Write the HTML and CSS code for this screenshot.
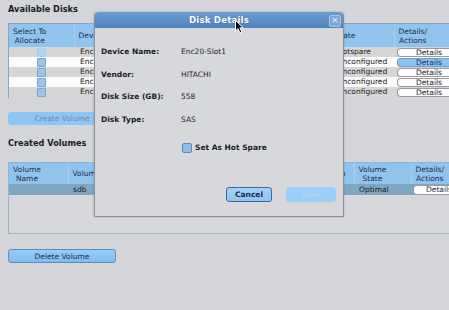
FILE: index.html
```html
<!DOCTYPE html>
<html>
<head>
<meta charset="utf-8">
<link rel="stylesheet" href="styles.css">
</head>
<body>
<div class="page">
  <h2 class="section-title">Available Disks</h2>
  <div class="table-frame disks-frame">
    <table class="grid disks">
      <colgroup>
        <col class="c-sel"><col class="c-dev"><col class="c-enc"><col class="c-slot"><col class="c-size"><col class="c-state"><col class="c-act">
      </colgroup>
      <thead>
        <tr>
          <th><span class="hd">Select To<br>Allocate</span></th>
          <th><span class="hd">Device</span></th>
          <th></th>
          <th></th>
          <th></th>
          <th><span class="hd">State</span></th>
          <th><span class="hd">Details/<br>Actions</span></th>
        </tr>
      </thead>
      <tbody>
        <tr class="odd"><td class="chk"><span class="cb cb-focus"></span></td><td>Enc20-Slot0</td><td></td><td></td><td></td><td>Hotspare</td><td class="act"><span class="pill">Details</span></td></tr>
        <tr class="even"><td class="chk"><span class="cb"></span></td><td>Enc20-Slot1</td><td></td><td></td><td></td><td>Unconfigured</td><td class="act"><span class="pill pill-on">Details</span></td></tr>
        <tr class="odd"><td class="chk"><span class="cb"></span></td><td>Enc20-Slot2</td><td></td><td></td><td></td><td>Unconfigured</td><td class="act"><span class="pill">Details</span></td></tr>
        <tr class="even"><td class="chk"><span class="cb"></span></td><td>Enc20-Slot3</td><td></td><td></td><td></td><td>Unconfigured</td><td class="act"><span class="pill">Details</span></td></tr>
        <tr class="odd"><td class="chk"><span class="cb"></span></td><td>Enc20-Slot4</td><td></td><td></td><td></td><td>Unconfigured</td><td class="act"><span class="pill">Details</span></td></tr>
      </tbody>
    </table>
  </div>
  <button class="wide-btn create-btn" disabled>Create Volume</button>

  <h2 class="section-title created-title">Created Volumes</h2>
  <div class="table-frame volumes-frame">
    <table class="grid volumes">
      <colgroup>
        <col class="v-name"><col class="v-dev"><col class="v-raid"><col class="v-size"><col class="v-alloc"><col class="v-state"><col class="v-act">
      </colgroup>
      <thead>
        <tr>
          <th><span class="hd">Volume<br>Name</span></th>
          <th><span class="hd">Volume</span></th>
          <th></th>
          <th></th>
          <th class="th-right">n</th>
          <th><span class="hd">Volume<br>State</span></th>
          <th><span class="hd">Details/<br>Actions</span></th>
        </tr>
      </thead>
      <tbody>
        <tr class="vol-row"><td></td><td class="sdb">sdb</td><td></td><td></td><td></td><td class="opt">Optimal</td><td class="act"><span class="pill pill-vol">Details</span></td></tr>
      </tbody>
    </table>
  </div>
  <button class="wide-btn delete-btn">Delete Volume</button>
</div>

<div class="dialog">
  <div class="dlg-title">
    <span class="dlg-title-text">Disk Details</span>
    <span class="dlg-close">×</span>
  </div>
  <div class="dlg-body">
    <div class="fields">
      <span class="lbl">Device Name:</span><span class="val">Enc20-Slot1</span>
      <span class="lbl">Vendor:</span><span class="val">HITACHI</span>
      <span class="lbl">Disk Size (GB):</span><span class="val">558</span>
      <span class="lbl">Disk Type:</span><span class="val">SAS</span>
    </div>
    <label class="spare"><span class="spare-box"></span><span class="spare-text">Set As Hot Spare</span></label>
    <div class="dlg-actions">
      <button class="dlg-btn cancel">Cancel</button>
      <button class="dlg-btn save" disabled>Save</button>
    </div>
  </div>
</div>

<svg class="cursor" width="11" height="14" viewBox="0 0 11 14">
  <path d="M0.5 0.5 L0.5 11 L3 8.6 L5 12.8 L6.8 12 L4.9 7.9 L8.3 7.9 Z" fill="#000" stroke="#fff" stroke-width="1"/>
</svg>
</body>
</html>
```

FILE: styles.css
```css
html, body {
  margin: 0;
  padding: 0;
  width: 449px;
  height: 310px;
  overflow: hidden;
  background: #d3d5d8;
  font-family: "DejaVu Sans", "Liberation Sans", sans-serif;
  color: #1e2228;
}

.page {
  position: relative;
  width: 441px;
  overflow: hidden;
  padding: 3px 0 0 8px;
  display: flex;
  flex-direction: column;
  align-items: flex-start;
}

.section-title {
  margin: 0;
  font-size: 8.2px;
  line-height: 12px;
  font-weight: bold;
  color: #1a1d22;
}

.created-title {
  margin-top: 12px;
}

.table-frame {
  margin-top: 8px;
  border: 1px solid #86a6c6;
  border-right: none;
  overflow: hidden;
  width: 441px;
}

.disks-frame {
  height: 74px;
  border-bottom: none;
  background: #d3d5d8;
}

.volumes-frame {
  margin-top: 13px;
  height: 70px;
  background: #d5d7da;
  border-color: #9bb2cb;
}

.grid {
  border-collapse: collapse;
  table-layout: fixed;
  font-size: 7.5px;
}

.disks { width: 452px; }
.c-sel { width: 65px; }
.c-dev { width: 21px; }
.c-enc { width: 80px; }
.c-slot { width: 76px; }
.c-size { width: 80px; }
.c-state { width: 63px; }
.c-act { width: 67px; }

.volumes { width: 482px; }
.v-name { width: 59px; }
.v-dev { width: 27px; }
.v-raid { width: 90px; }
.v-size { width: 90px; }
.v-alloc { width: 79px; }
.v-state { width: 57px; }
.v-act { width: 80px; }

.grid th {
  background: #90c3ee;
  color: #1c2e52;
  font-weight: normal;
  text-align: left;
  padding: 0 0 0 4px;
  border-right: 1px solid #a8cdef;
  line-height: 9px;
  vertical-align: middle;
  white-space: nowrap;
  overflow: hidden;
}

.grid th.th-right {
  text-align: right;
  padding-right: 8px;
}

.disks thead tr { height: 23px; }
.volumes thead tr { height: 21px; }

.hd {
  display: inline-block;
  text-align: center;
}

.grid td {
  padding: 0 0 0 6px;
  height: 10px;
  line-height: 10px;
  white-space: nowrap;
  overflow: hidden;
  color: #1d2024;
}

.grid td.act {
  padding: 0;
}

.odd td { background: #d6d6d6; }
.even td { background: #fbfbfb; }

.grid td.chk {
  padding: 0;
  text-align: center;
}

.cb {
  display: inline-block;
  width: 7px;
  height: 7px;
  margin-top: 1px;
  vertical-align: top;
  border: 1px solid #7ea4cc;
  border-radius: 1px;
  background: #9cc3e8;
}

.cb-focus {
  border-color: #a9cdee;
  background: #b3d4f1;
}

.pill {
  display: block;
  margin: 1px 0 0 3px;
  width: 62px;
  height: 7px;
  line-height: 7px;
  text-align: center;
  background: #fcfcfc;
  border: 1px solid #9a9a9a;
  border-right: none;
  border-radius: 4px 0 0 4px;
  color: #20242a;
}

.pill-on {
  background: #8cc0ee;
  border-color: #6f9bc8;
  color: #1a2f5a;
}

.vol-row td {
  background: #7fa7c2;
  height: 11px;
  line-height: 11px;
}

.vol-row td.sdb { padding-left: 5px; }
.vol-row td.opt { padding-left: 5px; }

.pill-vol {
  margin: 1px 0 0 2px;
  width: 78px;
  text-align: left;
  text-indent: 12px;
  height: 8px;
  line-height: 8px;
  color: #1c2a44;
}

.wide-btn {
  width: 108px;
  font-family: "DejaVu Sans", "Liberation Sans", sans-serif;
  font-size: 7.5px;
  padding: 0;
  border-radius: 3px;
  cursor: default;
}

.create-btn {
  margin-top: 14px;
  height: 13px;
  background: #8fc5f4;
  border: 1px solid #8fc5f4;
  color: #6d8cae;
}

.delete-btn {
  margin-top: 15px;
  height: 14px;
  background: linear-gradient(#93cdf9, #80bcef);
  border: 1px solid #5e8dbd;
  color: #1b2c4c;
}

.dialog {
  position: absolute;
  left: 94px;
  top: 12px;
  width: 248px;
  height: 204px;
  background: #d6d8db;
  border: 1px solid #8c9094;
  border-top: none;
  border-radius: 4px 4px 0 0;
  box-shadow: 0 0 2px rgba(0, 0, 0, 0.25);
  display: flex;
  flex-direction: column;
}

.dlg-title {
  height: 16px;
  position: relative;
  background: linear-gradient(#6c9bd1, #4f82bc);
  border-radius: 4px 4px 0 0;
  display: flex;
  align-items: center;
  justify-content: center;
}

.dlg-title-text {
  color: #ffffff;
  font-size: 8.6px;
  font-weight: bold;
  letter-spacing: 0.2px;
  text-shadow: 0 0 1px rgba(30, 60, 100, 0.6);
}

.dlg-close {
  position: absolute;
  right: 2px;
  top: 3px;
  width: 10px;
  height: 10px;
  line-height: 9px;
  text-align: center;
  font-size: 9px;
  color: #eef5fc;
  background: #7ba8d8;
  border: 1px solid #a9c7e7;
  border-radius: 2px;
}

.dlg-body {
  padding: 19px 7px 0 6px;
  display: flex;
  flex-direction: column;
}

.fields {
  display: grid;
  grid-template-columns: 80px auto;
  row-gap: 12.5px;
  line-height: 10px;
  font-size: 7.5px;
}

.lbl {
  font-weight: bold;
  color: #1a1d22;
}

.val {
  color: #22262c;
}

.spare {
  margin: 18px 0 0 81px;
  display: flex;
  align-items: center;
  gap: 3px;
  font-size: 7.5px;
  font-weight: bold;
  color: #1a1d22;
}

.spare-box {
  width: 8px;
  height: 8px;
  border: 1px solid #5f88b6;
  border-radius: 2px;
  background: #8fbde8;
}

.dlg-actions {
  margin-top: 34px;
  display: flex;
  justify-content: flex-end;
  gap: 14px;
}

.dlg-btn {
  height: 15px;
  padding: 0;
  font-family: "DejaVu Sans", "Liberation Sans", sans-serif;
  font-size: 7.5px;
  font-weight: bold;
  border-radius: 3px;
}

.cancel {
  width: 46px;
  background: linear-gradient(#a3d2f7, #8fc3ef);
  border: 1px solid #3f6a98;
  color: #1a2b4a;
}

.save {
  width: 50px;
  background: #9bcff8;
  border: 1px solid #9bcff8;
  color: #c9d4de;
  font-weight: normal;
}

.cursor {
  position: absolute;
  left: 235px;
  top: 20px;
}
```
